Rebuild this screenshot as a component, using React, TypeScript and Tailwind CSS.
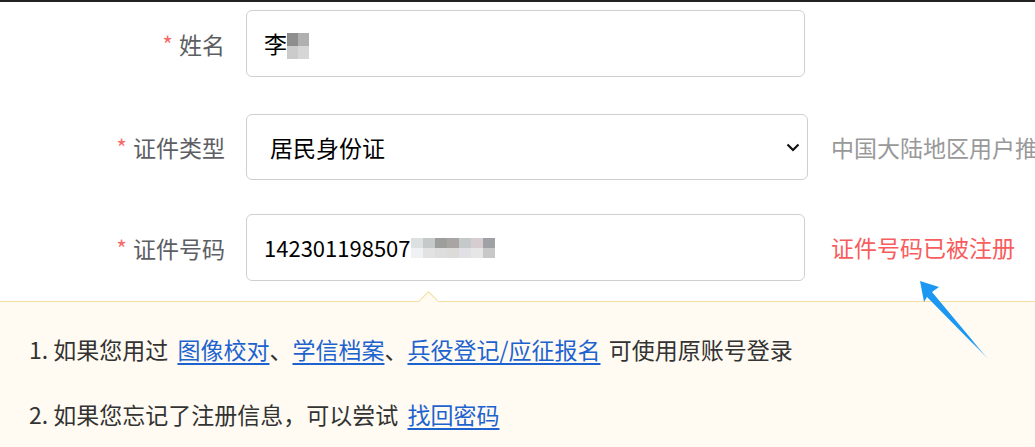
import React from "react";

const FONT = { fontFamily: '"Noto Sans CJK SC", "Noto Sans", sans-serif' };

// mosaic blocks that hide part of the values
const nameBlur = [
  ["#8e8e8e", "#b0b0b0"],
  ["#cbcbcb", "#d6d6d6"],
];
const idBlur = [
  ["#dde0e0", "#c5c9c9", "#9d9f9d", "#a9a5a5", "#c5c9c9", "#d5cdcf", "#a0a1a5"],
  ["#f0f1f3", "#e2e2e2", "#dddddd", "#dddada", "#e1e1e5", "#e6e6e6", "#c8c8c8"],
];

const Mosaic = ({ rows, w, h }: { rows: string[][]; w: number; h: number }) => (
  <span className="inline-flex flex-col align-middle">
    {rows.map((r, i) => (
      <span key={i} className="flex">
        {r.map((c, j) => (
          <span key={j} style={{ background: c, width: w, height: h }} />
        ))}
      </span>
    ))}
  </span>
);

const Label = ({ text }: { text: string }) => (
  <div className="w-[225px] shrink-0 text-right text-[23px] leading-[30px] text-[#5c5e63]">
    <span className="text-[#f56c6c] mr-[6px]">*</span>
    {text}
  </div>
);

export default function App() {
  return (
    <div
      className="relative w-[1035px] h-[447px] overflow-hidden bg-white border-t-2 border-[#222]"
      style={FONT}
    >
      <div className="flex flex-col">
        {/* 姓名 */}
        <div className="flex items-center mt-[8px]">
          <Label text="姓名" />
          <div className="ml-[21px] w-[559px] h-[67px] shrink-0 border border-[#cfcfcf] rounded-[6px] flex items-center pl-[17px] text-[23px] text-black">
            <span>李</span>
            <span className="-mt-[2px]">
              <Mosaic rows={nameBlur} w={11} h={13} />
            </span>
          </div>
        </div>

        {/* 证件类型 */}
        <div className="flex items-center mt-[37px]">
          <Label text="证件类型" />
          <div className="ml-[21px] w-[562px] h-[66px] shrink-0 border border-[#cfcfcf] rounded-[6px] flex items-center justify-between pl-[23px] pr-[6px] text-[23px] text-black">
            <span>居民身份证</span>
            <svg width="14" height="9" viewBox="0 0 14 9" className="mr-[1px]">
              <path d="M1.5 1.5 L7 7 L12.5 1.5" fill="none" stroke="#111" strokeWidth="2.2" />
            </svg>
          </div>
          <div className="ml-[23px] whitespace-nowrap text-[23px] text-[#999]">中国大陆地区用户推荐</div>
        </div>

        {/* 证件号码 */}
        <div className="flex items-center mt-[34px]">
          <Label text="证件号码" />
          <div className="ml-[21px] w-[559px] h-[67px] shrink-0 border border-[#cfcfcf] rounded-[6px] flex items-center pl-[17px] text-[22px] text-black">
            <span>142301198507</span>
            <Mosaic rows={idBlur} w={12} h={10} />
          </div>
          <div className="ml-[26px] whitespace-nowrap text-[23px] text-[#f85c5c]">证件号码已被注册</div>
        </div>

        {/* 提示 */}
        <div className="relative mt-[20px] h-[160px] border-t border-[#f3dd9f] bg-[#fffbf2] pt-[32px] pl-[29px] flex flex-col gap-[35px] text-[23px] leading-[30px] text-[#333]">
          <span className="absolute left-[415px] -top-[14px] w-[27px] h-[14px] overflow-hidden">
            <span className="absolute left-[3.5px] top-[7px] w-[19px] h-[19px] rotate-45 border border-[#f3dd9f] bg-[#fffbf2]" />
          </span>
          <div className="whitespace-nowrap">
            1. 如果您用过{" "}
            <a className="ml-[4px] text-[#1d63d0] underline underline-offset-[4px]">图像校对</a>、
            <a className="text-[#1d63d0] underline underline-offset-[4px]">学信档案</a>、
            <a className="text-[#1d63d0] underline underline-offset-[4px]">兵役登记/应征报名</a>{" "}
            <span className="ml-[3px]">可使用原账号登录</span>
          </div>
          <div className="whitespace-nowrap">
            2. 如果您忘记了注册信息，可以尝试{" "}
            <a className="ml-[4px] text-[#1d63d0] underline underline-offset-[4px]">找回密码</a>
          </div>
        </div>
      </div>

      {/* annotation arrow */}
      <svg className="absolute left-0 top-0 pointer-events-none" width="1035" height="447">
        <defs>
          <linearGradient id="tail" x1="920" y1="280" x2="988" y2="357" gradientUnits="userSpaceOnUse">
            <stop offset="0.75" stopColor="#1c98f2" />
            <stop offset="1" stopColor="#9fd3fb" />
          </linearGradient>
        </defs>
        <polygon
          points="920,279 939,285 932,290 988,357 927,295 924,300"
          fill="url(#tail)"
        />
      </svg>
    </div>
  );
}
